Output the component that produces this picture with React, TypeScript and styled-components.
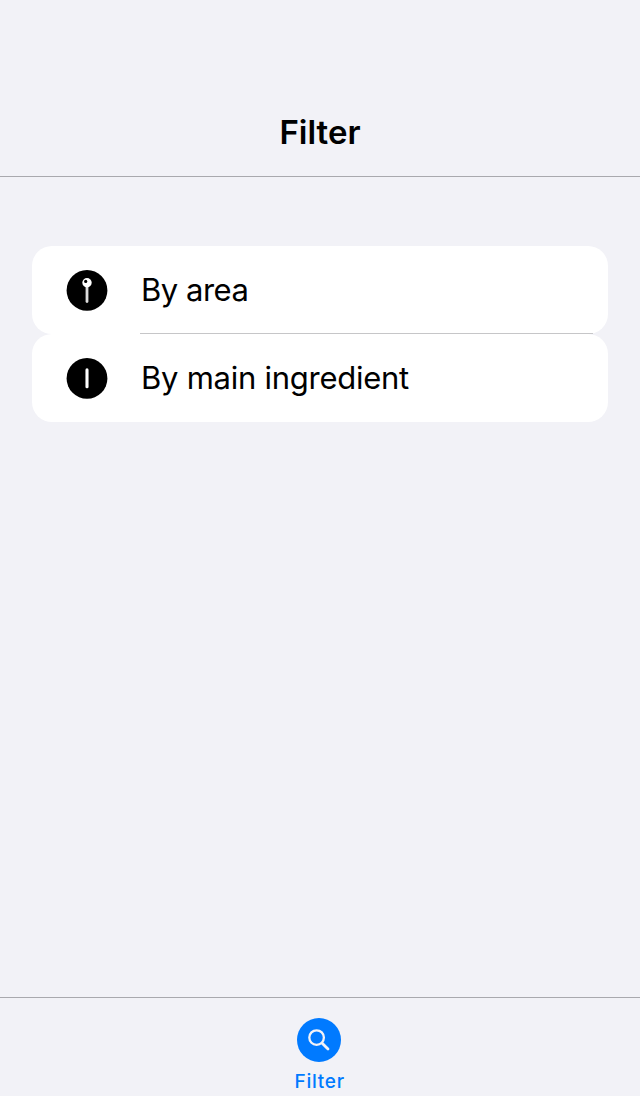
import React from "react";
import styled, { createGlobalStyle } from "styled-components";

const Global = createGlobalStyle`
  body { margin: 0; background: #f2f2f7; font-family: Inter, "Liberation Sans", sans-serif; color: #000; }
`;
const Screen = styled.div`
  box-sizing: border-box; width: 640px; height: 1096px;
  display: flex; flex-direction: column; background: #f2f2f7; overflow: hidden;
`;
const Header = styled.header`
  box-sizing: border-box; height: 177px; border-bottom: 1px solid #a9a9ae;
  display: flex; justify-content: center; align-items: flex-end; padding-bottom: 24px;
`;
const Title = styled.h1`
  margin: 0; font-size: 33px; line-height: 40px; font-weight: 600; letter-spacing: 0;
`;
const List = styled.main`
  flex: 1; padding: 69px 32px 0;
`;
const Row = styled.div`
  height: 88px; border-radius: 20px; background: #fff;
  display: flex; align-items: stretch;
`;
const IconSlot = styled.div`
  box-sizing: border-box; width: 108px; padding: 23px 0 0 34px;
`;
const Label = styled.div<{ $line?: boolean; $tracking: number }>`
  box-sizing: border-box; flex: 1; margin-right: 15px; padding: 24px 0 0 1px; height: 88px;
  font-size: 31px; line-height: 40px; letter-spacing: ${(p) => p.$tracking}px;
  border-bottom: ${(p) => (p.$line ? "1px solid #c6c6c8" : "none")};
`;
const TabBar = styled.nav`
  box-sizing: border-box; height: 99px; border-top: 1px solid #a9a9ae; padding: 20px 2px 0 0;
  display: flex; flex-direction: column; align-items: center; color: #007aff;
`;
const TabLabel = styled.span`
  margin-top: 8px; padding-left: 1.4px; font-size: 19px; line-height: 24px; font-weight: 500; letter-spacing: 0.75px;
`;

export default function App() {
  return (
    <Screen>
      <Global />
      <Header><Title>Filter</Title></Header>
      <List>
        <Row>
          <IconSlot>
            <svg width="42" height="42" viewBox="0 0 42 42">
              <circle cx="21" cy="21.4" r="20.4" fill="#000" />
              <path d="M21 17v15.6" stroke="#dcdcdc" strokeWidth="2.8" strokeLinecap="round" />
              <circle cx="21" cy="13.7" r="4.7" fill="#fff" />
              <circle cx="19.7" cy="12.4" r="1.6" fill="#000" />
            </svg>
          </IconSlot>
          <Label $line $tracking={-0.48}>By area</Label>
        </Row>
        <Row>
          <IconSlot>
            <svg width="42" height="42" viewBox="0 0 42 42">
              <circle cx="21" cy="21.4" r="20.4" fill="#000" />
              <path d="M21 12.9v16.9" stroke="#fff" strokeWidth="3.1" strokeLinecap="round" />
            </svg>
          </IconSlot>
          <Label $tracking={-0.26}>By main ingredient</Label>
        </Row>
      </List>
      <TabBar>
        <svg width="44" height="44" viewBox="0 0 44 44">
          <circle cx="22" cy="22" r="22" fill="#007aff" />
          <circle cx="19.6" cy="19.6" r="7.3" fill="none" stroke="#f2f2f7" strokeWidth="2.3" />
          <path d="M25.2 25.2L31 31" stroke="#f2f2f7" strokeWidth="2.8" strokeLinecap="round" />
        </svg>
        <TabLabel>Filter</TabLabel>
      </TabBar>
    </Screen>
  );
}
